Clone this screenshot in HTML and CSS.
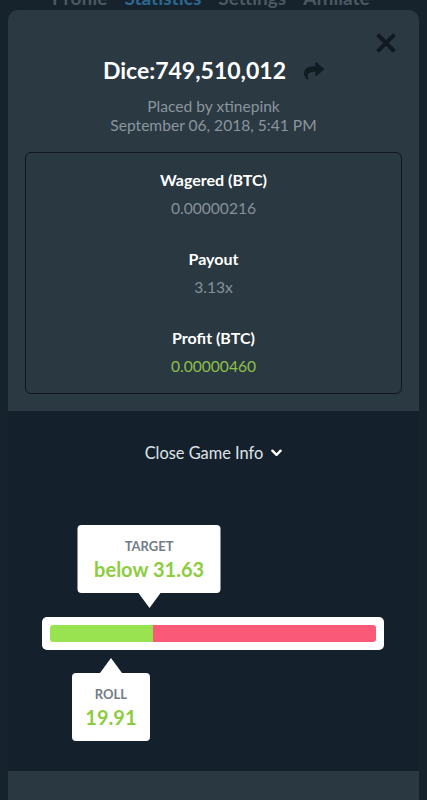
FILE: index.html
```html
<!DOCTYPE html>
<html>
<head>
<meta charset="utf-8">
<link rel="stylesheet" href="styles.css">
</head>
<body>
<div class="tabs">
  <span class="tab">Profile</span>
  <span class="tab active">Statistics</span>
  <span class="tab">Settings</span>
  <span class="tab">Affiliate</span>
</div>
<div class="modal">
  <button class="close" aria-label="Close">
    <svg viewBox="0 0 20 20" width="20" height="20"><path d="M3 3L17 17M17 3L3 17" stroke="#111a21" stroke-width="4" stroke-linecap="square"/></svg>
  </button>
  <section class="top">
    <div class="title-row">
      <h1 class="title">Dice:749,510,012</h1>
      <svg class="share" viewBox="0 0 512 512" width="20" height="20"><path fill="#111b22" d="M503.691 189.836L327.687 37.851C312.281 24.546 288 35.347 288 56.015v80.053C127.371 137.907 0 170.1 0 322.326c0 61.441 39.581 122.309 83.333 154.132 13.653 9.931 33.111-2.533 28.077-18.631C66.066 312.814 132.917 274.316 288 272.085V360c0 20.7 24.3 31.453 39.687 18.164l176.004-152c11.071-9.562 11.086-26.753 0-36.328z"/></svg>
    </div>
    <div class="meta">
      <div>Placed by xtinepink</div>
      <div>September 06, 2018, 5:41 PM</div>
    </div>
    <div class="stats">
      <div class="stat">
        <div class="label">Wagered (BTC)</div>
        <div class="value">0.00000216</div>
      </div>
      <div class="stat">
        <div class="label">Payout</div>
        <div class="value">3.13x</div>
      </div>
      <div class="stat">
        <div class="label">Profit (BTC)</div>
        <div class="value green">0.00000460</div>
      </div>
    </div>
  </section>
  <section class="game">
    <div class="toggle">Close Game Info
      <svg class="chev" viewBox="0 0 12 8" width="11" height="8"><path d="M1.5 1.5L6 6L10.5 1.5" fill="none" stroke="#ffffff" stroke-width="2.6" stroke-linecap="round" stroke-linejoin="round"/></svg>
    </div>
    <div class="dice">
      <div class="bar">
        <div class="track">
          <div class="win" style="width:31.63%"></div>
          <div class="lose"></div>
          <div class="tip tip-up" style="left:31.63%">
            <div class="tip-label">TARGET</div>
            <div class="tip-value">below 31.63</div>
          </div>
          <div class="tip tip-down" style="left:19.91%">
            <div class="tip-label">ROLL</div>
            <div class="tip-value">19.91</div>
          </div>
        </div>
      </div>
    </div>
  </section>
  <section class="bottom"></section>
</div>
</body>
</html>
```
FILE: styles.css
```css
* { box-sizing: border-box; }
html, body {
  margin: 0;
  padding: 0;
}
body {
  width: 427px;
  height: 800px;
  overflow: hidden;
  background: #17232c;
  font-family: "Lato", "Open Sans", sans-serif;
  color: #ffffff;
}
.tabs {
  height: 22px;
  margin-top: -12px;
  display: flex;
  gap: 17px;
  padding-left: 52px;
  font-size: 19px;
  line-height: 20px;
  font-weight: 700;
  color: #4a5862;
}
.tab.active { color: #2c6891; }
.modal {
  position: relative;
  margin: 0 8px;
  border-radius: 10px 10px 0 0;
  background: #2b3943;
  overflow: hidden;
}
.close {
  position: absolute;
  top: 23px;
  right: 23px;
  width: 20px;
  height: 20px;
  padding: 0;
  border: 0;
  background: none;
  display: block;
}
.close svg { display: block; }
.top {
  padding: 46px 17px 17px;
}
.title-row {
  display: flex;
  justify-content: center;
  align-items: center;
  gap: 18px;
}
.title {
  margin: 0;
  font-size: 23px;
  line-height: 28px;
  font-weight: 700;
  color: #ffffff;
}
.share { display: block; margin-top: 2px; }
.meta {
  margin-top: 13px;
  text-align: center;
  font-size: 15.6px;
  line-height: 19px;
  color: #8a959d;
}
.stats {
  margin-top: 17px;
  border: 1.5px solid #0f171d;
  border-radius: 6px;
  background: #2a3841;
  padding: 16.5px 0;
  display: flex;
  flex-direction: column;
  gap: 31px;
  text-align: center;
  height: 242px;
}
.label {
  font-size: 16px;
  line-height: 20px;
  font-weight: 700;
  color: #ffffff;
}
.value {
  margin-top: 8px;
  font-size: 15.6px;
  line-height: 20px;
  color: #86919a;
}
.value.green { color: #8dc04a; }
.game {
  background: #14212c;
  height: 360px;
  padding-top: 32px;
}
.toggle {
  display: flex;
  justify-content: center;
  align-items: center;
  gap: 8px;
  font-size: 16.4px;
  line-height: 20px;
  color: #dfe4e8;
}
.chev { display: block; }
.dice {
  padding: 154px 35px 0 34px;
}
.bar {
  background: #ffffff;
  border-radius: 5px;
  padding: 8px;
}
.track {
  position: relative;
  display: flex;
  height: 17px;
  border-radius: 3px;
}
.win {
  background: #9ae350;
  border-radius: 3px 0 0 3px;
}
.lose {
  flex: 1;
  background: #fa5a77;
  border-radius: 0 3px 3px 0;
}
.tip {
  position: absolute;
  transform: translateX(calc(-50% - 4px));
  background: #ffffff;
  border-radius: 4px;
  height: 68px;
  padding-top: 13px;
  text-align: center;
  white-space: nowrap;
}
.tip::after {
  content: "";
  position: absolute;
  left: 50%;
  margin-left: -11px;
  border-left: 11px solid transparent;
  border-right: 11px solid transparent;
}
.tip-up {
  bottom: 49px;
  width: 143px;
}
.tip-up::after {
  top: 100%;
  border-top: 15px solid #ffffff;
}
.tip-down {
  top: 48px;
  width: 78px;
}
.tip-down::after {
  bottom: 100%;
  border-bottom: 15px solid #ffffff;
}
.tip-label {
  font-size: 13px;
  line-height: 16px;
  font-weight: 700;
  color: #727c87;
}
.tip-value {
  margin-top: 3px;
  font-size: 20px;
  line-height: 24px;
  font-weight: 700;
  color: #8dcc3f;
}
.bottom {
  height: 40px;
  background: #2a3842;
}
```
